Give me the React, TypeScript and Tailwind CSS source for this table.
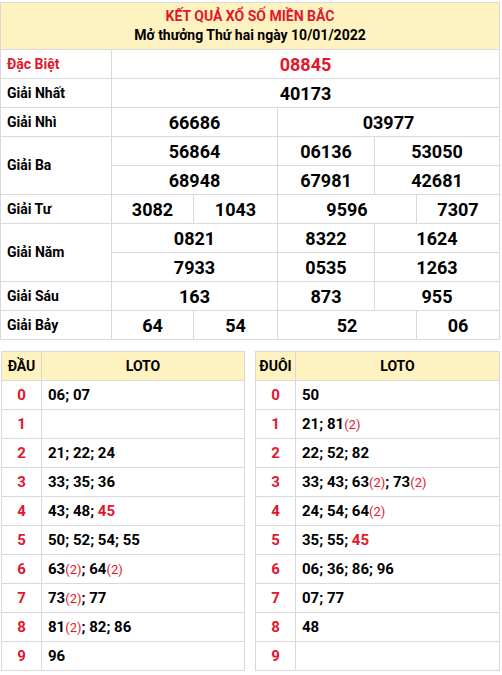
import React from 'react';

type Cell = { v: string; span?: number };
type Row = { label?: string; rowSpan?: number; red?: boolean; cells: Cell[] };

const rows: Row[] = [
  { label: 'Đặc Biệt', red: true, cells: [{ v: '08845', span: 5 }] },
  { label: 'Giải Nhất', cells: [{ v: '40173', span: 5 }] },
  { label: 'Giải Nhì', cells: [{ v: '66686', span: 2 }, { v: '03977', span: 3 }] },
  { label: 'Giải Ba', rowSpan: 2, cells: [{ v: '56864', span: 2 }, { v: '06136' }, { v: '53050', span: 2 }] },
  { cells: [{ v: '68948', span: 2 }, { v: '67981' }, { v: '42681', span: 2 }] },
  { label: 'Giải Tư', cells: [{ v: '3082' }, { v: '1043' }, { v: '9596', span: 2 }, { v: '7307' }] },
  { label: 'Giải Năm', rowSpan: 2, cells: [{ v: '0821', span: 2 }, { v: '8322' }, { v: '1624', span: 2 }] },
  { cells: [{ v: '7933', span: 2 }, { v: '0535' }, { v: '1263', span: 2 }] },
  { label: 'Giải Sáu', cells: [{ v: '163', span: 2 }, { v: '873' }, { v: '955', span: 2 }] },
  { label: 'Giải Bảy', cells: [{ v: '64' }, { v: '54' }, { v: '52', span: 2 }, { v: '06' }] },
];

const spanClass: Record<number, string> = {
  1: 'col-span-1',
  2: 'col-span-2',
  3: 'col-span-3',
  5: 'col-span-5',
};

// "45*" = red number, "63(2)" = count in red
const dau = ['06; 07', '', '21; 22; 24', '33; 35; 36', '43; 48; 45*', '50; 52; 54; 55', '63(2); 64(2)', '73(2); 77', '81(2); 82; 86', '96'];
const duoi = ['50', '21; 81(2)', '22; 52; 82', '33; 43; 63(2); 73(2)', '24; 54; 64(2)', '35; 55; 45*', '06; 36; 86; 96', '07; 77', '48', ''];

function Loto({ text }: { text: string }) {
  if (!text) return null;
  const parts = text.split('; ');
  return (
    <span className="whitespace-pre">
      {parts.map((p, i) => {
        const m = p.match(/^(\d+)(\*)?(?:\((\d)\))?$/);
        const num = m ? m[1] : p;
        return (
          <React.Fragment key={i}>
            {i > 0 ? '; ' : null}
            <span className={m && m[2] ? 'text-[#e3162b]' : ''}>{num}</span>
            {m && m[3] ? <span className="text-[13px] font-normal text-[#e3162b]">({m[3]})</span> : null}
          </React.Fragment>
        );
      })}
    </span>
  );
}

function LotoTable({ title, data, className }: { title: string; data: string[]; className: string }) {
  return (
    <div className={`grid grid-cols-[40px_1fr] auto-rows-[29px] border-l border-t border-[#d9d9d9] ${className}`}>
      <div className="flex items-center justify-center border-b border-r border-[#d9d9d9] bg-[#fff2c1] text-[14px] font-bold text-black">
        {title}
      </div>
      <div className="flex items-center justify-center border-b border-r border-[#d9d9d9] bg-[#fff2c1] text-[14px] font-bold text-black">
        LOTO
      </div>
      {data.map((d, i) => (
        <React.Fragment key={i}>
          <div className="flex items-center justify-center border-b border-r border-[#d9d9d9] text-[15px] font-bold text-[#e3162b]">
            {i}
          </div>
          <div className="flex items-center border-b border-r border-[#d9d9d9] pl-[6px] text-[15px] font-bold text-black">
            <Loto text={d} />
          </div>
        </React.Fragment>
      ))}
    </div>
  );
}

export default function App() {
  return (
    <div className="w-[500px] bg-white pt-[2px] font-['Roboto',sans-serif]">
      <div className="flex h-[48px] flex-col items-center justify-center border border-[#d9d9d9] bg-[#fff2c1] font-bold leading-[19px]">
        <div className="text-[14px] text-[#e3162b]">KẾT QUẢ XỔ SỐ MIỀN BẮC</div>
        <div className="text-[14px] text-black">Mở thưởng Thứ hai ngày 10/01/2022</div>
      </div>
      <div className="grid grid-cols-[111px_82px_84px_97px_42px_83px] auto-rows-[29px] border-l border-[#d9d9d9]">
        {rows.map((r, ri) => (
          <React.Fragment key={ri}>
            {r.label ? (
              <div
                className={`flex items-center border-b border-r border-[#d9d9d9] pl-[6px] text-[14px] font-bold ${
                  r.rowSpan === 2 ? 'row-span-2' : ''
                } ${r.red ? 'text-[#e3162b]' : 'text-black'}`}
              >
                {r.label}
              </div>
            ) : null}
            {r.cells.map((c, ci) => (
              <div
                key={ci}
                className={`flex items-center justify-center border-b border-r border-[#d9d9d9] text-[18px] font-bold ${
                  spanClass[c.span ?? 1]
                } ${r.red ? 'text-[#e3162b]' : 'text-black'}`}
              >
                {c.v}
              </div>
            ))}
          </React.Fragment>
        ))}
      </div>
      <div className="mt-[11px] flex justify-between">
        <LotoTable title="ĐẦU" data={dau} className="ml-[1px] w-[244px]" />
        <LotoTable title="ĐUÔI" data={duoi} className="w-[245px]" />
      </div>
    </div>
  );
}
